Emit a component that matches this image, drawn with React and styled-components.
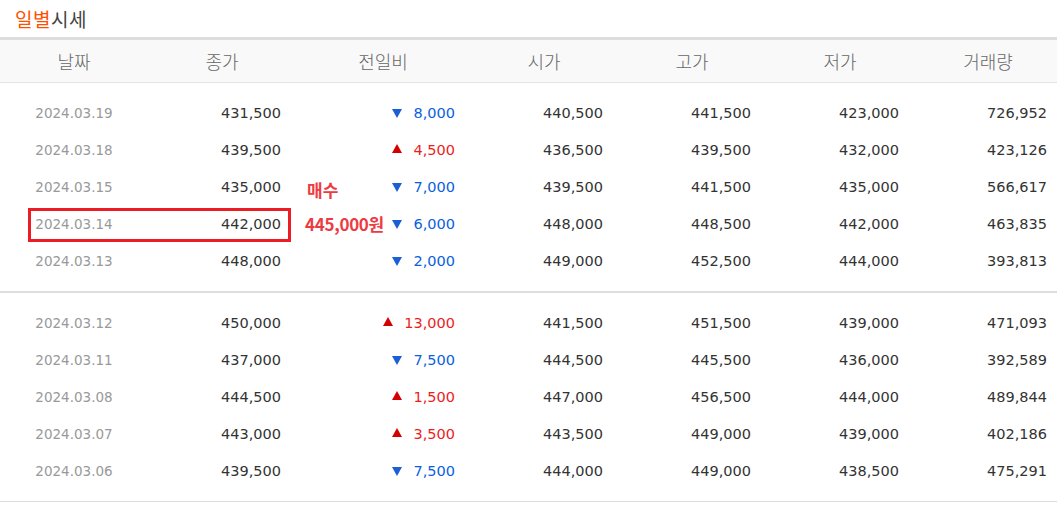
import React from 'react';
import styled, { createGlobalStyle } from 'styled-components';

const GlobalStyle = createGlobalStyle`
    body{
        margin: 0;
        background: #fff;
        font-family: "DejaVu Sans", "Noto Sans CJK KR", sans-serif;
    }
`;

const COLS = '148px 148px 174px 148px 148px 148px 148px';

const groups = [
    [
        ['2024.03.19', '431,500', 'down', '8,000', '440,500', '441,500', '423,000', '726,952'],
        ['2024.03.18', '439,500', 'up', '4,500', '436,500', '439,500', '432,000', '423,126'],
        ['2024.03.15', '435,000', 'down', '7,000', '439,500', '441,500', '435,000', '566,617'],
        ['2024.03.14', '442,000', 'down', '6,000', '448,000', '448,500', '442,000', '463,835'],
        ['2024.03.13', '448,000', 'down', '2,000', '449,000', '452,500', '444,000', '393,813'],
    ],
    [
        ['2024.03.12', '450,000', 'up', '13,000', '441,500', '451,500', '439,000', '471,093'],
        ['2024.03.11', '437,000', 'down', '7,500', '444,500', '445,500', '436,000', '392,589'],
        ['2024.03.08', '444,500', 'up', '1,500', '447,000', '456,500', '444,000', '489,844'],
        ['2024.03.07', '443,000', 'up', '3,500', '443,500', '449,000', '439,000', '402,186'],
        ['2024.03.06', '439,500', 'down', '7,500', '444,000', '449,000', '438,500', '475,291'],
    ],
];

const headers = ['날짜', '종가', '전일비', '시가', '고가', '저가', '거래량'];

export default function App(){
    return (
        <>
            <GlobalStyle />
            <S.Wrap>
                <S.Title>
                    <em>일별</em>시세
                </S.Title>
                <S.Table>
                    <S.Head>
                        {headers.map((h) => (
                            <span key={h}>{h}</span>
                        ))}
                    </S.Head>
                    {groups.map((rows, gi) => (
                        <S.Group key={gi}>
                            {rows.map((r) => (
                                <S.Row key={r[0]}>
                                    <S.Date>{r[0]}</S.Date>
                                    <S.Num>{r[1]}</S.Num>
                                    <S.Diff dir={r[2]}>
                                        <S.Arrow dir={r[2]} />
                                        {r[3]}
                                    </S.Diff>
                                    <S.Num>{r[4]}</S.Num>
                                    <S.Num>{r[5]}</S.Num>
                                    <S.Num>{r[6]}</S.Num>
                                    <S.Num>{r[7]}</S.Num>

                                    {r[0] === '2024.03.15' && (
                                        <S.Note top={21}>매수</S.Note>
                                    )}
                                    {r[0] === '2024.03.14' && (
                                        <>
                                            <S.Note top={18} wide>445,000원</S.Note>
                                            <S.Mark />
                                        </>
                                    )}
                                </S.Row>
                            ))}
                        </S.Group>
                    ))}
                </S.Table>
            </S.Wrap>
        </>
    )
}

const S = {
    Wrap: styled.div`
        width: 1057px;
        overflow: hidden;
    `,
    Title: styled.h2`
        margin: 0;
        height: 37px;
        padding-left: 15px;
        display: flex;
        align-items: center;
        font-family: "Noto Sans CJK KR", sans-serif;
        font-size: 19px;
        font-weight: 400;
        color: #444;
        letter-spacing: 0.5px;

        em{
            font-style: normal;
            color: #ff5000;
        }
    `,
    Table: styled.div`
        width: 1062px;
        border-top: 3px solid #dedede;
        border-bottom: 1px solid #dcdcdc;
    `,
    Head: styled.div`
        display: grid;
        grid-template-columns: ${COLS};
        height: 42px;
        align-items: center;
        background: #f9f9f9;
        border-bottom: 1px solid #e4e4e4;

        span{
            text-align: center;
            font-family: "Noto Sans CJK KR", sans-serif;
            font-size: 18px;
            font-weight: 300;
            color: #666;
        }
    `,
    Group: styled.div`
        padding: 11px 0 12px;

        & + &{
            border-top: 2px solid #dedede;
        }
    `,
    Row: styled.div`
        position: relative;
        display: grid;
        grid-template-columns: ${COLS};
        height: 37px;
        align-items: center;
    `,
    Date: styled.span`
        text-align: center;
        font-size: 13.5px;
        color: #999;
    `,
    Num: styled.span`
        text-align: right;
        padding-right: 15px;
        font-size: 14.5px;
        color: #333;
    `,
    Diff: styled.span`
        display: flex;
        justify-content: flex-end;
        align-items: center;
        gap: 11px;
        padding-right: 15px;
        font-size: 14.5px;
        color: ${(p) => (p.dir === 'up' ? '#ee1c1c' : '#0a5fe0')};
    `,
    Arrow: styled.i`
        width: 0;
        height: 0;
        border-left: 5px solid transparent;
        border-right: 5px solid transparent;
        ${(p) => p.dir === 'up'
            ? 'border-bottom: 9px solid #d40000; margin-top: -2px;'
            : 'border-top: 9px solid #1a5fd6; margin-top: 1px;'}
    `,
    Note: styled.span`
        position: absolute;
        left: ${(p) => (p.wide ? 305 : 307)}px;
        top: ${(p) => p.top}px;
        transform: translateY(-50%);
        font-family: "Noto Sans CJK KR", sans-serif;
        font-size: 17px;
        font-weight: 700;
        letter-spacing: ${(p) => (p.wide ? '-0.3px' : '0')};
        color: #ee3a42;
        background: #fff;
    `,
    Mark: styled.div`
        position: absolute;
        left: 28px;
        top: 3px;
        width: 263px;
        height: 34px;
        box-sizing: border-box;
        border: 3px solid #ec1c24;
    `,
}
